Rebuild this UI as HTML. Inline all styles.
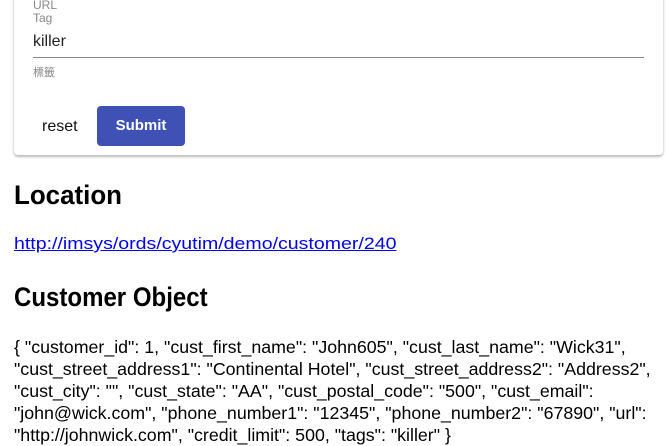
<!DOCTYPE html>
<html><head><meta charset="utf-8"><style>
body{margin:0;width:666px;height:446px;overflow:hidden;background:#fff;font-family:"Liberation Sans","Noto Sans CJK TC",sans-serif;position:relative}
.a{position:absolute;white-space:nowrap;transform-origin:left top}
.card{position:absolute;left:14px;top:-10px;width:649px;height:165px;background:#fff;border-radius:4px;box-shadow:0 2px 2px rgba(0,0,0,.2),0 1px 4px rgba(0,0,0,.12)}
.ln{position:absolute;left:14px;font-size:17.8px;line-height:22px;color:#000;white-space:nowrap}
</style></head><body>
<div class="card"></div>
<div class="a" style="left:33px;top:-2px;font-size:12px;color:#888">URL</div>
<div class="a" style="left:33px;top:11px;font-size:12px;color:#888">Tag</div>
<div class="a" style="left:33px;top:33px;font-size:16px;color:#222">killer</div>
<div class="a" style="left:33px;top:57px;width:611px;height:1px;background:#8a8a8a"></div>
<div class="a" style="left:33px;top:64px;font-size:11px;color:#888">標籤</div>
<div class="a" style="left:42px;top:118px;font-size:16px;color:#111">reset</div>
<div class="a" style="left:97px;top:106px;width:88px;height:40px;background:#3f51b5;border-radius:4px;color:#fff;font-weight:bold;font-size:15px;line-height:40px;text-align:center">Submit</div>
<div class="a" style="left:14px;top:180px;font-size:27px;font-weight:bold;transform:scaleX(.96)">Location</div>
<div class="a" style="left:14px;top:234px;font-size:17px;color:#0000ee;text-decoration:underline;transform:scaleX(1.15)">http://imsys/ords/cyutim/demo/customer/240</div>
<div class="a" style="left:14px;top:282px;font-size:27px;font-weight:bold;transform:scaleX(.89)">Customer Object</div>
<div class="ln" style="top:336px">{ "customer_id": 1, "cust_first_name": "John605", "cust_last_name": "Wick31",</div>
<div class="ln" style="top:358px">"cust_street_address1": "Continental Hotel", "cust_street_address2": "Address2",</div>
<div class="ln" style="top:380px">"cust_city": "", "cust_state": "AA", "cust_postal_code": "500", "cust_email":</div>
<div class="ln" style="top:402px">"john@wick.com", "phone_number1": "12345", "phone_number2": "67890", "url":</div>
<div class="ln" style="top:424px">"http://johnwick.com", "credit_limit": 500, "tags": "killer" }</div>
</body></html>
